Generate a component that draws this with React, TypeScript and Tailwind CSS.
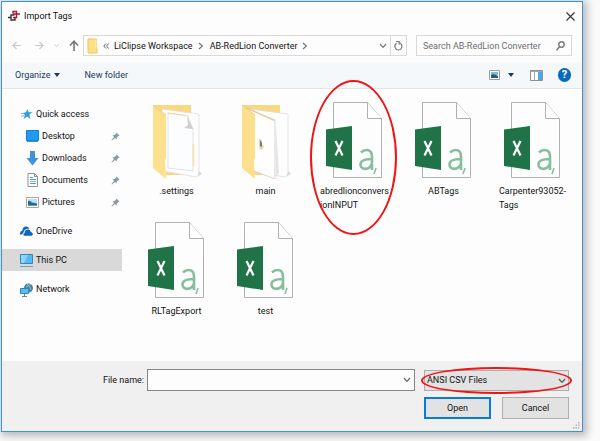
import type { ReactNode } from "react";

function Chevron({ className = "" }: { className?: string }) {
  return (
    <svg viewBox="0 0 8 6" className={`h-[6px] w-[8px] shrink-0 ${className}`} fill="none" stroke="currentColor" strokeWidth="1.2">
      <path d="M1 1l3 3.4L7 1" />
    </svg>
  );
}

function AppLogo() {
  return (
    <svg viewBox="0 0 12 12" className="h-3 w-3" fill="none" strokeWidth="1.4">
      <path d="M0 7.5h3M6.500 5H3v5h4V8" stroke="#333" />
      <path d="M5 3.500V1.500h3.500v6H5M8.500 4H12M5 4h3" stroke="#a8192c" />
    </svg>
  );
}

function FolderSmall() {
  return (
    <svg viewBox="0 0 11 16" className="h-4 w-[11px] shrink-0">
      <path d="M1 1h8.500v9.500H10V15H1z" fill="#fddf88" stroke="#efc65c" />
      <path d="M9 1.500v9" stroke="#fff0bd" />
    </svg>
  );
}

function FolderLarge({ open }: { open: boolean }) {
  return (
    <svg viewBox="0 0 60 77" className="h-[77px] w-[60px]">
      <path d="M6 3h38v70H19z" fill="#f8d981" />
      <path d="M15 7l37 5v61l-3 2-34-6z" fill="#fdfdfd" stroke="#d8d8d8" strokeWidth=".7" />
      {open ? (
        <>
          <path d="M9 5l30 13v59L18 69z" fill="#fefefe" stroke="#c4c4c4" strokeWidth=".7" />
          <path d="M10 6l28 12.500" stroke="#ecc96d" strokeWidth="1" />
          <path d="M40 24v51l3-4z" fill="#e4e4e4" />
          <path d="M23 37l3 1v4l2 3-2 3-3-2z" fill="#ead7a2" />
          <path d="M24 38l2 3v4l-2-1z" fill="#5684a4" />
        </>
      ) : (
        <>
          <path d="M21 11l20 3 5 13v42l-25-3z" fill="#fcfdfe" stroke="#d7d7d7" strokeWidth=".7" />
          <path d="M21 11l18 2.500" stroke="#edd89c" />
          <path d="M40 14l1 9-4 3 9 1z" fill="#cecece" />
          <path d="M46.500 42v22" stroke="#f3e3a9" strokeWidth="1.500" />
        </>
      )}
      <path d="M6 3l13 10v43l-1 2 1 19L6 66z" fill="#fce08d" />
      <path d="M6 3l13 10" stroke="#e9c567" strokeWidth=".7" />
      <path d="M52 69l3 3-4 2" fill="#d5d5d5" />
    </svg>
  );
}

function CsvIcon() {
  return (
    <svg viewBox="0 0 60 77" className="h-[77px] w-[60px]">
      <path d="M8.500.5h34l14 16v59h-48z" fill="#fdfdfd" stroke="#b0b0b0" />
      <path d="M42.500.5v16h14" fill="#fff" stroke="#b0b0b0" />
      <path d="M1 27.500L27 24v44L1 64z" fill="#1f7346" />
      <path d="M10.500 39l7 14.500M17.500 39l-7 14.500" stroke="#fff" strokeWidth="2.200" />
      <path d="M36 50.500q2.500-2.500 5.500-2.500 5.500 0 5.500 6.500V68M47 57c-7 0-11.500 1-11.500 5.500 0 6 9 6 11.500-1" fill="none" stroke="#87bea0" strokeWidth="2.600" />
      <path d="M51 66l-2 6" stroke="#87bea0" strokeWidth="1.600" />
    </svg>
  );
}

function StarIcon() {
  return (
    <svg viewBox="0 0 12 12" className="h-3 w-3">
      <path d="M6.500 1l1 3.200 4 .1-3.200 2.300L9.500 11 6.200 8.500 2.500 11l1.400-3.900L2 5l3-.8z" fill="#2c9be8" />
      <path d="M0 5.500h3M0 8h3" stroke="#7ebfee" />
    </svg>
  );
}

function DesktopIcon() {
  return (
    <svg viewBox="0 0 13 12" className="h-3 w-[13px]">
      <path d="M.5.5h12v10H.5z" fill="#1e9cf4" stroke="#1680cd" />
      <path d="M1 11.500h11" stroke="#4b8fc4" />
    </svg>
  );
}

function DownloadIcon() {
  return (
    <svg viewBox="0 0 13 15" className="h-[15px] w-[13px]">
      <path d="M4 0h5v7h3.500L6.500 14.500.5 7H4z" fill="#3f93dc" />
    </svg>
  );
}

function DocumentIcon() {
  return (
    <svg viewBox="0 0 11 14" className="h-[14px] w-[11px]">
      <path d="M1 .5h6.500l3 3v10H1z" fill="#fff" stroke="#909090" />
      <path d="M7.500.5v3h3" fill="none" stroke="#909090" />
      <path d="M3 4.500h3M3 6.500h6M3 10.500h6" stroke="#4e9ccd" />
      <path d="M3 8.500h6" stroke="#83bce0" />
    </svg>
  );
}

function PictureIcon() {
  return (
    <svg viewBox="0 0 13 11" className="h-[11px] w-[13px]">
      <path d="M.5.5h12v10H.5z" fill="#fff" stroke="#a6a6a6" />
      <path d="M2 2h9v7H2z" fill="#b9dff5" />
      <path d="M2 4q2-1 4 1.500L11 6.500V9H2z" fill="#2e6a83" />
      <path d="M2 8h9v1H2z" fill="#4f9fce" />
    </svg>
  );
}

function CloudIcon() {
  return (
    <svg viewBox="0 0 13 10" className="h-[10px] w-[13px]">
      <path d="M0 8.500C-.3 6 1 5 2.300 4.800 2.400 2 4 .5 6 .5c1.700 0 2.800.9 3.300 2.200C5.500 2.200 3.500 4.500 3.700 6.500 2.500 7 2.500 8 2.600 8.500z" fill="#1669b8" />
      <path d="M4.500 9.800C3 9.500 3 7.300 4.700 7 4.600 4.500 6.300 3.300 8 3.500c1.600.1 2.500 1.300 2.700 2.500C13 6.200 13.500 9.300 11.500 9.800z" fill="#0a67be" />
    </svg>
  );
}

function PcIcon() {
  return (
    <svg viewBox="0 0 13 15" className="h-[15px] w-[13px]">
      <path d="M.5 1.500h12v9H.5z" fill="#56b9f2" stroke="#3c83b3" />
      <path d="M1 2h7L4 10H1z" fill="#8ed5fa" />
      <path d="M0 13.500h13" stroke="#6fa3c2" />
    </svg>
  );
}

function NetworkIcon() {
  return (
    <svg viewBox="0 0 13 15" className="h-[15px] w-[13px]">
      <circle cx="8.500" cy="6" r="4.500" fill="#4584a6" />
      <path d="M7 2q3 2 4 6M6 5q3-1 5-3" stroke="#9fcbe0" fill="none" strokeWidth=".8" />
      <path d="M.5 6.500h8v5h-8z" fill="#5bbcf1" stroke="#3584b5" />
      <path d="M4.500 12v2M2 14.500h5" stroke="#65889d" />
    </svg>
  );
}

function PinIcon() {
  return (
    <svg viewBox="0 0 9 9" className="h-[9px] w-[9px]">
      <path d="M5.500.5l3 3-1 .4-1.600 1.600-.2 2L4 6 1 8.500.5 8 3 5 1.500 3.300l2-.2L5.200 1.500z" fill="#8d9aa2" />
    </svg>
  );
}

type Place = { label: string; icon: ReactNode; child?: boolean; selected?: boolean };

const places: Place[][] = [
  [
    { label: "Quick access", icon: <StarIcon /> },
    { label: "Desktop", icon: <DesktopIcon />, child: true },
    { label: "Downloads", icon: <DownloadIcon />, child: true },
    { label: "Documents", icon: <DocumentIcon />, child: true },
    { label: "Pictures", icon: <PictureIcon />, child: true },
  ],
  [{ label: "OneDrive", icon: <CloudIcon /> }],
  [{ label: "This PC", icon: <PcIcon />, selected: true }],
  [{ label: "Network", icon: <NetworkIcon /> }],
];

type Entry = { lines: string[]; kind: "full" | "open" | "csv"; circled?: boolean };

const entries: Entry[] = [
  { lines: [".settings"], kind: "full" },
  { lines: ["main"], kind: "open" },
  { lines: ["abredlionconvers", "ionINPUT"], kind: "csv", circled: true },
  { lines: ["ABTags"], kind: "csv" },
  { lines: ["Carpenter93052-", "Tags"], kind: "csv" },
  { lines: ["RLTagExport"], kind: "csv" },
  { lines: ["test"], kind: "csv" },
];

function TitleBar() {
  return (
    <header className="flex h-7 items-center gap-1 pr-[5px] pl-1.5">
      <AppLogo />
      <h1 className="flex-1">Import Tags</h1>
      <button aria-label="Close" className="p-0.5">
        <svg viewBox="0 0 9 9" className="h-[9px] w-[9px]" stroke="#333" strokeWidth="1.100">
          <path d="M.5.5l8 8M8.500.5l-8 8" />
        </svg>
      </button>
    </header>
  );
}

function AddressRow() {
  return (
    <div className="flex h-8 items-center pt-1 pr-2.5 pb-[5px] pl-2.5">
      <button aria-label="Back" className="text-[#c9c9c9]">
        <svg viewBox="0 0 9 9" className="h-[9px] w-[9px]" fill="none" stroke="currentColor" strokeWidth="1.200">
          <path d="M9 4.500H1M4.500 1L1 4.500 4.500 8" />
        </svg>
      </button>
      <button aria-label="Forward" className="ml-3.5 text-[#c9c9c9]">
        <svg viewBox="0 0 9 9" className="h-[9px] w-[9px]" fill="none" stroke="currentColor" strokeWidth="1.200">
          <path d="M0 4.500h8M4.500 1L8 4.500 4.500 8" />
        </svg>
      </button>
      <button aria-label="Recent locations" className="ml-2.5 text-[#c9c9c9]">
        <svg viewBox="0 0 5 3" className="h-[3px] w-[5px]" fill="none" stroke="currentColor">
          <path d="M.5.5l2 2 2-2" />
        </svg>
      </button>
      <button aria-label="Up" className="ml-2.5 text-[#777]">
        <svg viewBox="0 0 10 11" className="h-[11px] w-[10px]" fill="none" stroke="currentColor" strokeWidth="1.600">
          <path d="M5 11V1M1 5.500L5 1.200l4 4.300" />
        </svg>
      </button>
      <nav aria-label="Path" className="ml-1 flex h-[21px] min-w-0 flex-1 items-center border border-[#d9d9d9] pl-[3px]">
        <FolderSmall />
        <svg viewBox="0 0 6 6" className="ml-[5px] h-[6px] w-[6px]" fill="none" stroke="#666">
          <path d="M3 .5L.8 3 3 5.500M5.700.5L3.500 3l2.200 2.500" />
        </svg>
        <a href="#workspace" className="ml-[5px] whitespace-nowrap">LiClipse Workspace</a>
        <Chevron className="ml-1 -rotate-90 text-[#777]" />
        <a href="#converter" className="ml-[5px] whitespace-nowrap">AB-RedLion Converter</a>
        <Chevron className="ml-1 -rotate-90 text-[#777]" />
        <button aria-label="Previous locations" className="ml-auto px-[3px] text-[#777]">
          <Chevron />
        </button>
        <button aria-label="Refresh" className="flex h-full w-4 items-center justify-center border-l border-[#d9d9d9]">
          <svg viewBox="0 0 9 10" className="h-[10px] w-[9px]" fill="none" stroke="#777" strokeWidth="1.200">
            <path d="M6 2a3.500 3.700 0 1 1-3.500.2M2 0.500h3.200v3" />
          </svg>
        </button>
      </nav>
      <label className="ml-[9px] flex h-[21px] w-[156px] items-center border border-[#d9d9d9] pr-1.5 pl-1.5">
        <input aria-label="Search" placeholder="Search AB-RedLion Converter" className="min-w-0 flex-1 outline-none placeholder:text-[#6d6d6d]" />
        <svg viewBox="0 0 9 10" className="h-[10px] w-[9px]" fill="none" stroke="#777" strokeWidth="1.400">
          <circle cx="5.500" cy="3.500" r="2.700" />
          <path d="M3.600 5.500L.5 9.300" />
        </svg>
      </label>
    </div>
  );
}

function Toolbar() {
  return (
    <div className="flex h-[27px] items-center border-b border-[#e2e4e6] bg-[#f5f8fa] pr-[11px] pl-[13px] text-[#1e395b]">
      <button className="flex items-center gap-1">
        Organize
        <svg viewBox="0 0 6 4" className="h-1 w-1.5" fill="currentColor"><path d="M0 0h6L3 4z" /></svg>
      </button>
      <button className="ml-6">New folder</button>
      <button aria-label="Change view" className="ml-auto flex items-center gap-2">
        <svg viewBox="0 0 11 10" className="h-[10px] w-[11px]">
          <path d="M.5.5h10v9H.5z" fill="#fff" stroke="#969da3" />
          <path d="M2 2h7v3H2z" fill="#77bde6" />
          <path d="M2 5q3-2 7 1v2H2z" fill="#285d75" />
        </svg>
        <svg viewBox="0 0 6 4" className="h-1 w-1.5" fill="currentColor"><path d="M0 0h6L3 4z" /></svg>
      </button>
      <button aria-label="Preview pane" className="ml-4">
        <svg viewBox="0 0 13 11" className="h-[11px] w-[13px]">
          <path d="M.5.5h12v10H.5z" fill="#fff" stroke="#8b8f93" />
          <path d="M1 1.500h11M4.500 2v8" stroke="#a5a8aa" />
          <path d="M8 2h4v8H8z" fill="#4aa5ea" />
        </svg>
      </button>
      <button aria-label="Help" className="ml-[15px] flex h-[14px] w-[13px] items-center justify-center rounded-full bg-[#0969bb] text-[11px] font-bold text-white">
        ?
      </button>
    </div>
  );
}

function Sidebar() {
  return (
    <nav aria-label="Places" className="flex w-[120px] shrink-0 flex-col gap-[7px] pt-3.5">
      {places.map((group) => (
        <ul key={group[0].label}>
          {group.map((place) => (
            <li key={place.label}>
              <a
                href={`#${place.label}`}
                className={`flex h-[22px] items-center gap-[3px] pr-0.5 ${place.child ? "pl-6" : "pl-[18px]"} ${place.selected ? "bg-[#d9d9d9]" : ""}`}
              >
                <span className="flex w-[13px] justify-center">{place.icon}</span>
                <span className="flex-1">{place.label}</span>
                {place.child && <PinIcon />}
              </a>
            </li>
          ))}
        </ul>
      ))}
    </nav>
  );
}

function FileItem({ entry }: { entry: Entry }) {
  return (
    <li className="relative flex h-[120px] flex-col items-center gap-[5px]">
      {entry.kind === "csv" ? <CsvIcon /> : <FolderLarge open={entry.kind === "open"} />}
      <span className="leading-[14px]">
        {entry.lines.map((line) => (
          <span key={line} className="block">{line}</span>
        ))}
      </span>
      {entry.circled && (
        <span className="pointer-events-none absolute -top-[22px] left-0 h-[155px] w-[87px] rounded-[50%] border-2 border-[#f01414]" />
      )}
    </li>
  );
}

function Footer() {
  return (
    <footer className="flex flex-col gap-1.5 bg-[#f0f0f0] pt-2 pr-[13px] pb-3">
      <div className="flex items-center">
        <label htmlFor="file-name" className="w-[145px] shrink-0 pr-[3px] text-right">File name:</label>
        <div className="flex h-[22px] min-w-0 flex-1 items-center border border-[#858585] bg-[#fdfdfd] pr-[3px] text-[#666]">
          <input id="file-name" className="h-full min-w-0 flex-1 px-1 text-black outline-none" />
          <button aria-label="Recent file names"><Chevron /></button>
        </div>
        <div className="relative ml-[9px] w-[145px]">
          <select aria-label="File type" className="block h-[21px] w-full appearance-none border border-[#adadad] bg-[#e3e3e3] pl-0.5 outline-none">
            <option>ANSI CSV Files</option>
          </select>
          <Chevron className="pointer-events-none absolute top-2 right-[3px] text-[#555]" />
          <span className="pointer-events-none absolute -top-[3px] -right-[3px] -left-[3px] h-[27px] rounded-[50%] border-2 border-[#f01414]" />
        </div>
      </div>
      <div className="flex justify-end gap-[11px]">
        <button className="h-[22px] w-[67px] border-2 border-[#0b7ad4] bg-[#e2e2e2]">Open</button>
        <button className="h-[22px] w-[67px] border border-[#adadad] bg-[#e2e2e2]">Cancel</button>
      </div>
    </footer>
  );
}

export default function App() {
  return (
    <div className="flex min-h-screen bg-[#fafafa] pt-px pr-[17px] pb-[9px] pl-px font-['Roboto',sans-serif] text-[9px] leading-[14px] text-[#111]">
      <main className="relative flex min-w-0 flex-1 flex-col border border-[#3c93dc] bg-[#fdfdfd] shadow-[2px_2px_8px_2px_#b8b8b8]">
        <TitleBar />
        <AddressRow />
        <Toolbar />
        <div className="flex flex-1">
          <Sidebar />
          <ul className="grid flex-1 grid-cols-[repeat(auto-fill,89px)] content-start pt-[13px] pl-[10px]">
            {entries.map((entry) => <FileItem key={entry.lines[0]} entry={entry} />)}
          </ul>
        </div>
        <Footer />
        <svg viewBox="0 0 7 7" className="absolute right-0.5 bottom-0.5 h-[7px] w-[7px]" fill="#b5b5b5">
          <path d="M5 0h1.500v1.500H5zM5 2.500h1.500V4H5zM5 5h1.500v1.500H5zM2.500 2.500H4V4H2.500zM2.500 5H4v1.500H2.500zM0 5h1.500v1.500H0z" />
        </svg>
      </main>
    </div>
  );
}
